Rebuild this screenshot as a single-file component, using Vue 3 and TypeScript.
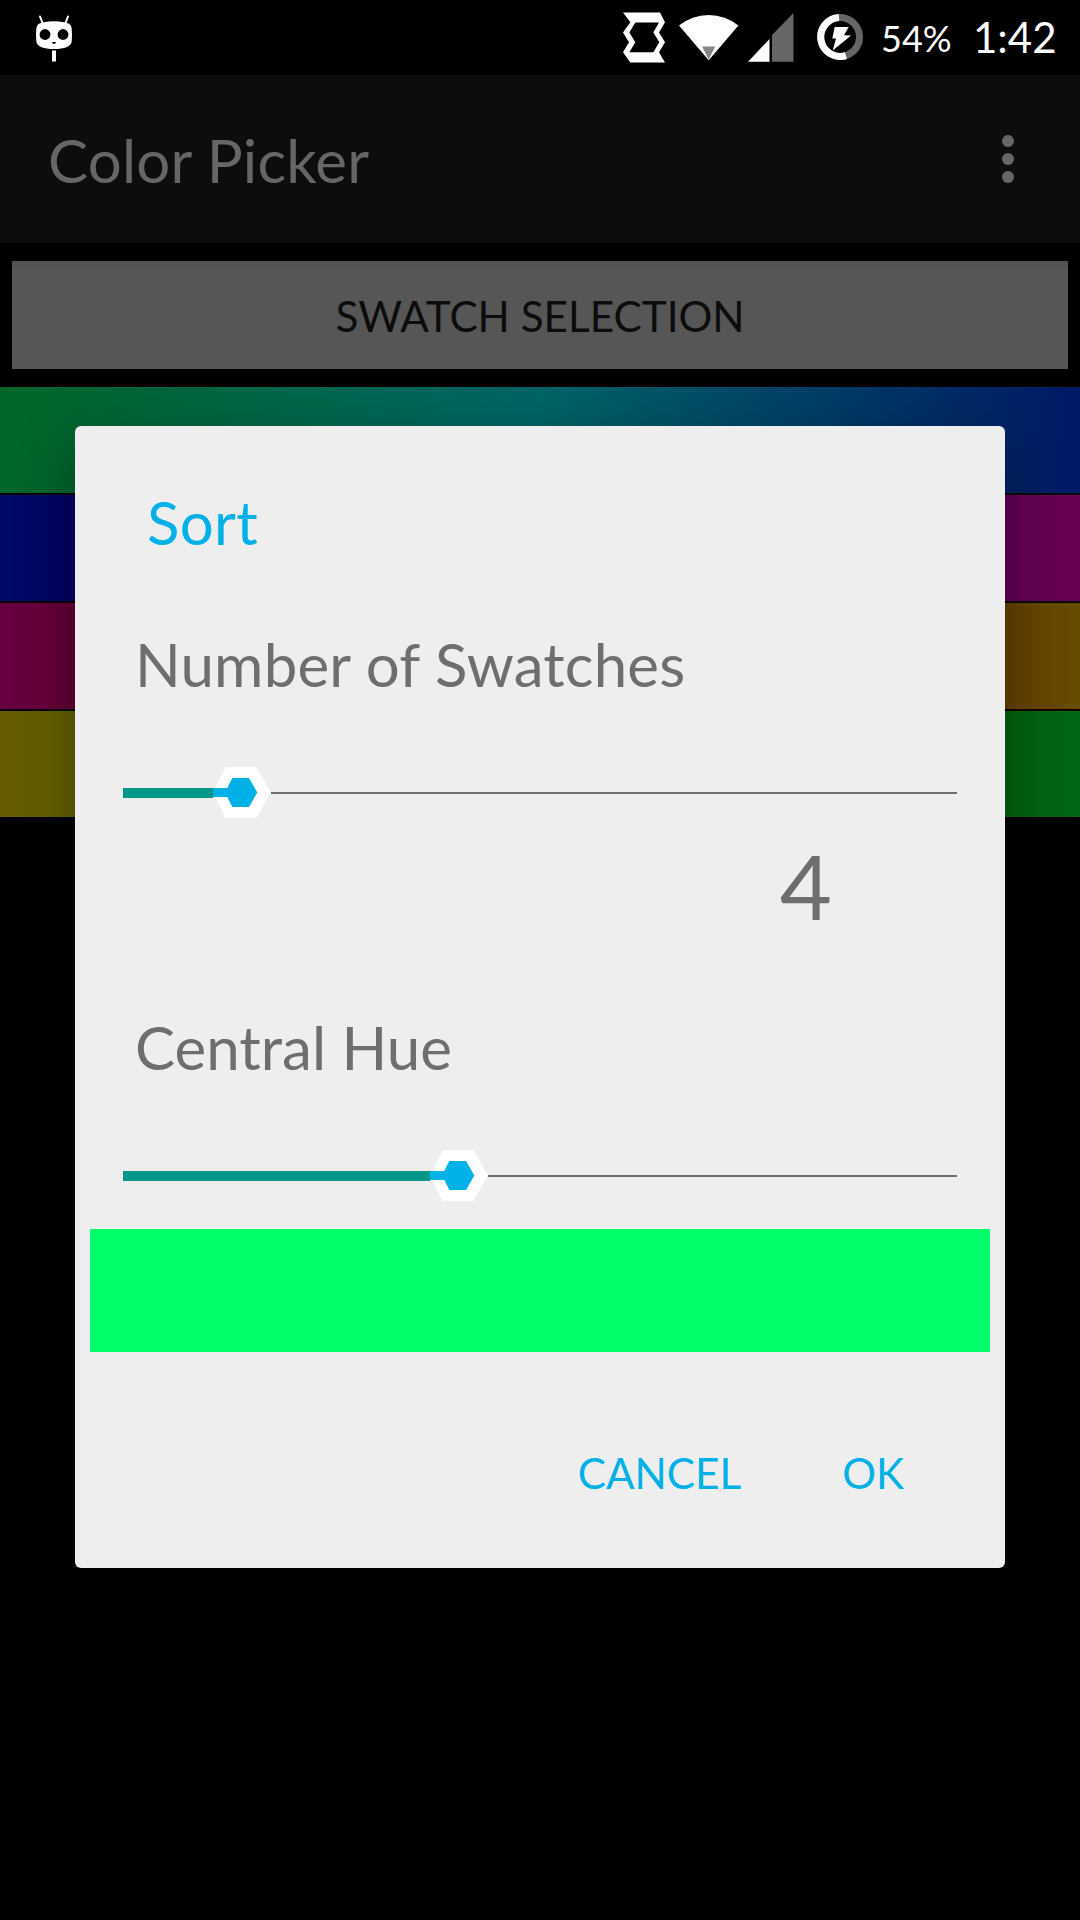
<script setup lang="ts">
interface Swatch {
  from: number
  mid: number
  to: number
}

const swatches: Swatch[] = [
  { from: 143, mid: 181, to: 225 },
  { from: 234, mid: 273, to: 313 },
  { from: 322, mid: 364, to: 404 },
  { from: 53, mid: 93, to: 133 },
]

const swatchCount = 4
const countFill = 90
const hueFill = 307

// Builds a dimmed hue sweep with enough stops to stay saturated.
function sweep(s: Swatch): string {
  const stops: string[] = []
  for (let i = 0; i <= 12; i++) {
    const hue = i <= 6 ? s.from + ((s.mid - s.from) * i) / 6 : s.mid + ((s.to - s.mid) * (i - 6)) / 6
    stops.push(`hsl(${hue % 360}, 100%, 20%)`)
  }
  return `linear-gradient(to right, ${stops.join(', ')})`
}
</script>

<template>
  <div class="screen">
    <header class="status">
      <svg class="cid" width="36" height="48" viewBox="0 0 36 48">
        <path d="M4 1.5 6.5 8M32 1.5 29.500 8" stroke="#fff" stroke-width="2" stroke-linecap="round" />
        <path d="M8 7.200Q18 5.500 28 7.200Q35 8 35.600 13Q36.300 20 35.600 27Q34 34 18 34Q2 34 .4 27Q-.3 20 .4 13Q1 8 8 7.200Z" fill="#fff" />
        <circle cx="9" cy="19.500" r="5.400" fill="#000" />
        <circle cx="27" cy="19.500" r="5.400" fill="#000" />
        <path d="M16 27h4q-.5 2-2 2t-2-2z" fill="#000" />
        <rect x="16" y="35.500" width="4" height="11" fill="#fff" />
      </svg>
      <div class="status-right">
        <svg class="nfc" width="42" height="51" viewBox="0 0 126 150">
          <path fill="#fff" fill-rule="evenodd" d="M0 0H111L126 29 108 60 126 89 108 119 126 150H22L0 119 18 89 0 60 22 29ZM37 30 19 60 37 89 19 119H91L109 89 91 60 108 30Z" />
        </svg>
        <svg class="wifi" width="60" height="46" viewBox="0 0 60 46">
          <path fill="#fff" d="M0 10.600Q13 0 29.700 0T59.400 10.600L29.700 45.300Z" />
          <path fill="#848484" d="M23 31.500H36.200L29.700 44.500Z" />
        </svg>
        <svg class="signal" width="46" height="49" viewBox="0 0 46 49">
          <path fill="#fff" d="M0 48.700 21.500 26V48.700Z" />
          <path fill="#666" d="M24 48.700V22L45.500 0V48.700Z" />
        </svg>
        <svg class="battery" width="46" height="46" viewBox="0 0 46 46">
          <circle cx="23" cy="23" r="19.500" fill="none" stroke="#666" stroke-width="7" />
          <path d="M22 3.500A19.500 19.500 0 1 0 29 41.600" fill="none" stroke="#fff" stroke-width="7" />
          <path fill="#fff" d="M17.700 13H31.700L27 21.200L34 21.500L15.700 36.500L19 24.500H15.300Z" />
        </svg>
        <span class="percent">54%</span>
        <span class="clock">1:42</span>
      </div>
    </header>

    <div class="appbar">
      <h1>Color Picker</h1>
      <div class="overflow"><i></i><i></i><i></i></div>
    </div>

    <button class="select">SWATCH SELECTION</button>

    <div class="swatches">
      <div v-for="s in swatches" :key="s.from" class="swatch" :style="{ background: sweep(s) }"></div>
    </div>

    <section class="dialog">
      <h2>Sort</h2>
      <p class="label count">Number of Swatches</p>
      <div class="slider">
        <div class="fill" :style="{ width: countFill + 'px' }"></div>
        <svg width="58" height="51" viewBox="0 0 58 51">
          <path fill="#fff" d="M0 25.400 12.700 0H43.300L58 25.400 43.300 51H12.700Z" />
          <path fill="#00b1e7" d="M0 21H14.300L19.300 11H36L44.300 25.400 36 40H19.300L14.300 30H0Z" />
        </svg>
        <div class="track"></div>
      </div>
      <p class="value">{{ swatchCount }}</p>
      <p class="label hue">Central Hue</p>
      <div class="slider">
        <div class="fill" :style="{ width: hueFill + 'px' }"></div>
        <svg width="58" height="51" viewBox="0 0 58 51">
          <path fill="#fff" d="M0 25.400 12.700 0H43.300L58 25.400 43.300 51H12.700Z" />
          <path fill="#00b1e7" d="M0 21H14.300L19.300 11H36L44.300 25.400 36 40H19.300L14.300 30H0Z" />
        </svg>
        <div class="track"></div>
      </div>
      <div class="preview"></div>
      <div class="actions">
        <button>CANCEL</button>
        <button>OK</button>
      </div>
    </section>
  </div>
</template>

<style>
body {
  background: #000;
}
</style>

<style scoped>
.screen {
  position: relative;
  width: 1080px;
  height: 1920px;
  overflow: hidden;
  background: #000;
  font-family: Lato, sans-serif;
}
h1,
h2,
p {
  margin: 0;
  font-weight: 400;
}
button {
  border: 0;
  padding: 0;
  background: none;
  font: 400 42.25px/50px Lato, sans-serif;
  white-space: nowrap;
}
svg {
  display: block;
  flex: none;
}
.status {
  height: 75px;
  display: flex;
  justify-content: space-between;
  align-items: flex-start;
  color: #fff;
}
.cid {
  margin: 15px 0 0 36px;
}
.status-right {
  display: flex;
  align-items: flex-start;
  width: 457px;
}
.nfc {
  margin-top: 12px;
}
.wifi {
  margin: 15px 0 0 14px;
}
.signal {
  margin: 13px 0 0 9px;
}
.battery {
  margin: 14px 0 0 23px;
}
.percent {
  width: 92px;
  margin-left: 18px;
  font-size: 36px;
  line-height: 75px;
  padding-top: 1px;
}
.clock {
  font-size: 42px;
  line-height: 75px;
}
.appbar {
  height: 168px;
  box-sizing: border-box;
  padding: 0 66px 0 48px;
  background: #0d0d0d;
  display: flex;
  align-items: center;
  justify-content: space-between;
}
.appbar h1 {
  padding-top: 2px;
  font-size: 60px;
  line-height: 72px;
  letter-spacing: 0.2px;
  color: #666;
}
.overflow {
  display: flex;
  flex-direction: column;
  gap: 6px;
}
.overflow i {
  width: 12px;
  height: 12px;
  border-radius: 50%;
  background: #666;
}
.select {
  display: block;
  box-sizing: border-box;
  width: 1056px;
  height: 108px;
  margin: 18px 12px;
  padding-top: 2px;
  background: linear-gradient(#515151, #565656 10px);
  color: #0c0c0c;
}
.swatches {
  display: flex;
  flex-direction: column;
  gap: 2px;
}
.swatch {
  height: 106px;
}
.dialog {
  position: absolute;
  left: 75px;
  top: 426px;
  width: 930px;
  height: 1142px;
  box-sizing: border-box;
  padding-top: 60px;
  border-radius: 6px;
  background: #eee;
  box-shadow: 0 20px 55px rgba(0, 0, 0, 0.38);
}
.dialog h2 {
  padding-left: 72px;
  font-size: 60px;
  line-height: 72px;
  letter-spacing: 0.3px;
  color: #00b1e7;
}
.label {
  margin-top: 70px;
  padding-left: 60px;
  font-size: 60px;
  line-height: 72px;
  color: #6e6e6e;
}
.label.count {
  letter-spacing: 0.2px;
}
.label.hue {
  margin-top: 72px;
}
.slider {
  display: flex;
  align-items: center;
  height: 51px;
  margin: 67px 48px 0;
}
.fill {
  flex: none;
  height: 10px;
  background: #009688;
  margin-top: 1px;
}
.track {
  flex: 1;
  height: 2px;
  margin-top: 1px;
  background: #6e6e6e;
}
.value {
  margin: 13px 173px 0 0;
  font-size: 90px;
  line-height: 108px;
  text-align: right;
  color: #6e6e6e;
}
.preview {
  height: 123px;
  margin: 28px 15px 0;
  background: #00ff6a;
}
.actions {
  display: flex;
  justify-content: flex-end;
  gap: 101px;
  margin: 96px 101px 0 0;
}
.actions button {
  color: #00b1e7;
}
</style>
